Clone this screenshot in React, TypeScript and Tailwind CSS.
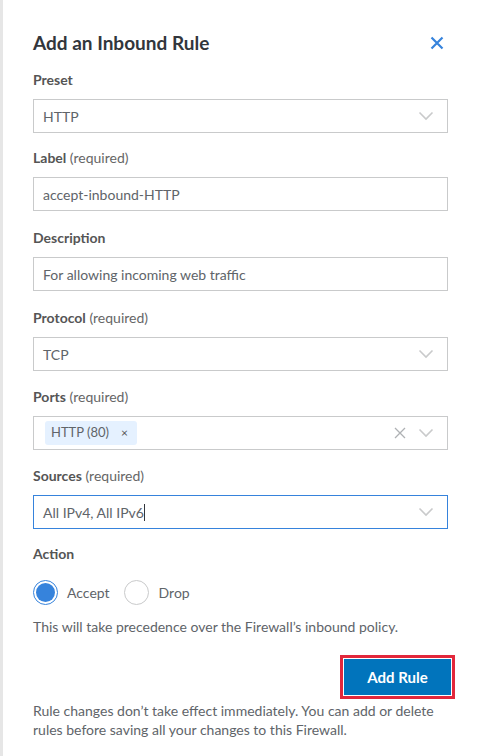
import React from 'react';

const Chevron = () => (
  <svg width="16" height="10" viewBox="0 0 16 10" className="text-[#c9cacb]">
    <path d="M1.5 1.5 L8 8 L14.5 1.5" fill="none" stroke="currentColor" strokeWidth="1.6" />
  </svg>
);

const Label = ({ title, required }: { title: string; required?: boolean }) => (
  <div className="text-[14px] leading-[18px] mb-[10px] text-[#555555]">
    <span className="font-bold">{title}</span>
    {required && <span className="text-[#666666]"> (required)</span>}
  </div>
);

const Field: React.FC<{ title: string; required?: boolean; className?: string; children: React.ReactNode }> = ({
  title,
  required,
  className,
  children,
}) => (
  <div className={className ?? 'mt-[16px]'}>
    <Label title={title} required={required} />
    {children}
  </div>
);

const TextBox = ({ value }: { value: string }) => (
  <div className="h-[34px] border border-[#c9cacb] flex items-center px-[9px] text-[14px] text-[#606469]">
    {value}
  </div>
);

const SelectBox = ({ value, focused }: { value: string; focused?: boolean }) => (
  <div
    className={
      focused
        ? 'h-[34px] border border-[#3683dc] flex items-center justify-between pl-[9px] pr-[13px] text-[14px] text-[#606469]'
        : 'h-[34px] border border-[#c9cacb] flex items-center justify-between pl-[9px] pr-[13px] text-[14px] text-[#606469]'
    }
  >
    <span className="flex items-center">
      {value}
      {focused && <span className="inline-block w-px h-[17px] bg-[#32363c]" />}
    </span>
    <Chevron />
  </div>
);

export default function App() {
  return (
    <div className="min-h-[756px] bg-white border-l-[3px] border-[#e6e6e6] font-['Lato','Noto_Sans',sans-serif]">
      <div className="pl-[30px] pr-[32px] pt-[31px] pb-[16px]">
        <div className="flex items-center justify-between">
          <h2 className="text-[19px] leading-[24px] font-bold text-[#32363c]">Add an Inbound Rule</h2>
          <svg width="14" height="14" viewBox="0 0 14 14" className="mr-[4px]">
            <path d="M1.5 1.5 L12.5 12.5 M12.5 1.5 L1.5 12.5" stroke="#3683dc" strokeWidth="2.2" />
          </svg>
        </div>

        <div className="mt-[1px]">
          <Field title="Preset">
            <SelectBox value="HTTP" />
          </Field>
          <Field title="Label" required>
            <TextBox value="accept-inbound-HTTP" />
          </Field>
          <Field title="Description" className="mt-[18px]">
            <TextBox value="For allowing incoming web traffic" />
          </Field>
          <Field title="Protocol" required className="mt-[18px]">
            <SelectBox value="TCP" />
          </Field>
          <Field title="Ports" required className="mt-[17px]">
            <div className="h-[34px] border border-[#c9cacb] flex items-center justify-between pl-[11px] pr-[13px]">
              <span className="flex items-center h-[24px] bg-[#e5f1ff] rounded-[3px] pl-[6px] pr-[9px] text-[13px] text-[#606469]">
                HTTP (80)
                <span className="ml-[12px] text-[12px] text-[#555555]">×</span>
              </span>
              <span className="flex items-center gap-[12px]">
                <svg width="12" height="12" viewBox="0 0 12 12">
                  <path d="M1 1 L11 11 M11 1 L1 11" stroke="#aeb1b4" strokeWidth="1.3" />
                </svg>
                <Chevron />
              </span>
            </div>
          </Field>
          <Field title="Sources" required className="mt-[17px]">
            <SelectBox value="All IPv4, All IPv6" focused />
          </Field>

          <div className="mt-[16px] text-[14px] leading-[18px] font-bold text-[#555555]">Action</div>
          <div className="mt-[17px] flex items-center">
            <span className="w-[25px] h-[25px] rounded-full border border-[#3683dc] flex items-center justify-center">
              <span className="w-[19px] h-[19px] rounded-full bg-[#3683dc]" />
            </span>
            <span className="ml-[9px] text-[14px] text-[#606469]">Accept</span>
            <span className="ml-[14px] w-[25px] h-[25px] rounded-full border border-[#c9cacb]" />
            <span className="ml-[10px] text-[14px] text-[#606469]">Drop</span>
          </div>
          <p className="mt-[13px] text-[14px] leading-[18px] text-[#606469]">
            This will take precedence over the Firewall’s inbound policy.
          </p>

          <div className="mt-[19px] flex justify-end mr-[-7px]">
            <div className="border-[3px] border-[#e2283c] p-px">
              <button className="h-[36px] w-[107px] bg-[#0174bc] text-white text-[15px] font-bold">
                Add Rule
              </button>
            </div>
          </div>

          <p className="mt-[2px] text-[14px] leading-[19px] text-[#606469]">
            Rule changes don’t take effect immediately. You can add or delete rules before saving all your
            changes to this Firewall.
          </p>
        </div>
      </div>
    </div>
  );
}
